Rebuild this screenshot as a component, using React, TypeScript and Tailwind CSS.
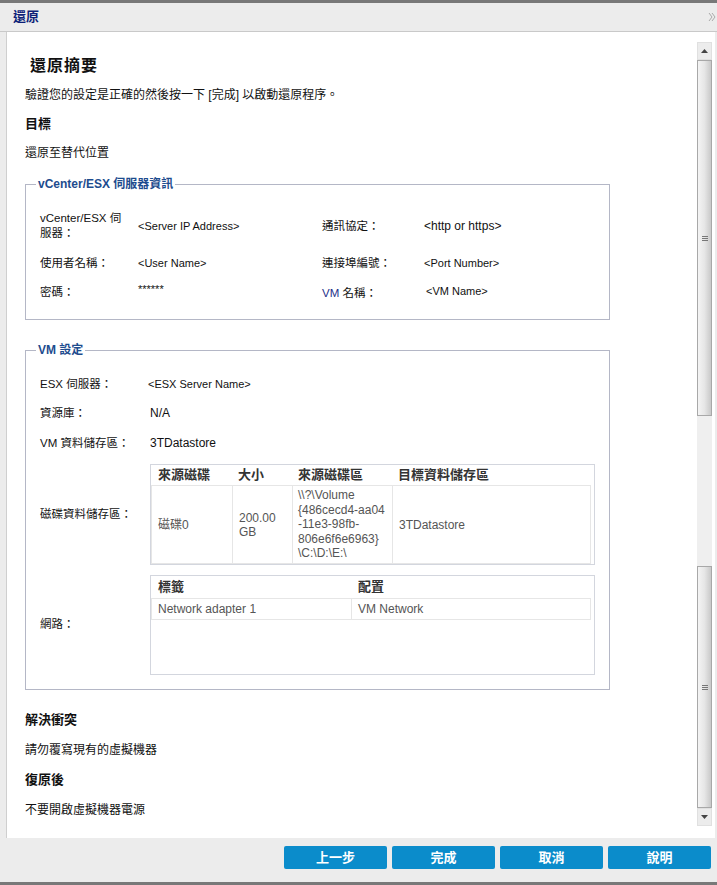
import type { ReactNode } from "react";

const font = { fontFamily: '"Liberation Sans", "Noto Sans CJK TC", sans-serif' };

function Legend({ children }: { children: ReactNode }) {
    return (
        <legend className="-ml-[4px] px-[2px] text-[12px] leading-[16px] font-bold text-[#1d4c8e]">
            {children}
        </legend>
    );
}

function Thumb({ h }: { h: string }) {
    return (
        <div
            className={`${h} flex items-center justify-center border border-[#a8a8a8] bg-gradient-to-r from-[#f4f4f4] via-[#e6e6e6] to-[#c9c9c9]`}
        >
            <div className="flex flex-col gap-[1px]">
                <div className="w-[6px] h-[1px] bg-[#777]" />
                <div className="w-[6px] h-[1px] bg-[#777]" />
                <div className="w-[6px] h-[1px] bg-[#777]" />
            </div>
        </div>
    );
}

function Scrollbar() {
    return (
        <div className="w-[15px] flex flex-col pt-[10px]">
            <div className="h-[18px] flex items-center justify-center bg-[#ececec] border border-[#e0e0e0]">
                <svg width="7" height="4" viewBox="0 0 7 4">
                    <path d="M0 4 L3.5 0 L7 4 Z" fill="#444" />
                </svg>
            </div>
            <Thumb h="h-[356px]" />
            <div className="h-[150px] bg-[#efefef]" />
            <Thumb h="h-[242px]" />
            <div className="h-[18px] flex items-center justify-center bg-[#ececec] border border-[#e0e0e0]">
                <svg width="7" height="4" viewBox="0 0 7 4">
                    <path d="M0 0 L3.5 4 L7 0 Z" fill="#444" />
                </svg>
            </div>
        </div>
    );
}

const footerButtons = ["上一步", "完成", "取消", "說明"];

export default function App() {
    return (
        <div
            className="w-[717px] h-[885px] flex flex-col bg-[#ececec] border-t-[3px] border-b-[3px] border-[#787878] text-[#111]"
            style={font}
        >
            {/* Title bar */}
            <div className="h-[29px] flex items-center justify-between pl-[13px] pr-[1px] border-b border-[#c9c9c9]">
                <span className="text-[13px] font-bold text-[#0d1f78]">還原</span>
                <svg width="8" height="10" viewBox="0 0 8 10">
                    <path d="M1 1 L4 5 L1 9 M4 1 L7 5 L4 9" stroke="#aaa" strokeWidth="1" fill="none" />
                </svg>
            </div>

            {/* Body */}
            <div className="flex-1 flex pl-[6px] pr-[2px] min-h-0">
                <div className="flex-1 flex bg-white border-l border-[#cfcfcf]">
                    <div className="flex-1 pl-[18px] pt-[22px] text-[12px]">
                        <div className="h-[24px] leading-[24px] pl-[5px] text-[16px] font-bold tracking-[1px]">
                            還原摘要
                        </div>
                        <div className="mt-[7px] h-[20px] leading-[20px]">
                            驗證您的設定是正確的然後按一下 [完成] 以啟動還原程序。
                        </div>
                        <div className="mt-[9px] h-[20px] leading-[20px] text-[13px] font-bold">目標</div>
                        <div className="mt-[9px] h-[20px] leading-[20px]">還原至替代位置</div>

                        {/* vCenter fieldset */}
                        <fieldset className="mt-[13px] w-[585px] border border-[#b4b7c6] pl-[14px] pt-[19px] pb-[17px]">
                            <Legend>vCenter/ESX 伺服器資訊</Legend>
                            <div className="grid grid-cols-[98px_184px_102px_1fr] text-[11.5px]">
                                <div className="h-[30px] leading-[15px]">
                                    vCenter/ESX 伺<br />服器：
                                </div>
                                <div className="h-[30px] leading-[30px] text-[11px]">&lt;Server IP Address&gt;</div>
                                <div className="h-[30px] leading-[30px]">通訊協定：</div>
                                <div className="h-[30px] leading-[30px] text-[12px]">&lt;http or https&gt;</div>

                                <div className="mt-[12px] h-[20px] leading-[20px]">使用者名稱：</div>
                                <div className="mt-[12px] h-[20px] leading-[20px] text-[11px]">&lt;User Name&gt;</div>
                                <div className="mt-[12px] h-[20px] leading-[20px]">連接埠編號：</div>
                                <div className="mt-[12px] h-[20px] leading-[20px] text-[11px]">&lt;Port Number&gt;</div>

                                <div className="mt-[9px] h-[20px] leading-[20px]">密碼：</div>
                                <div className="mt-[9px] h-[20px] leading-[14px] text-[11px]">******</div>
                                <div className="mt-[9px] h-[20px] leading-[22px]">
                                    <span className="text-[#1d2f8a]">VM</span> 名稱：
                                </div>
                                <div className="mt-[9px] h-[20px] leading-[18px] pl-[2px] text-[11px]">&lt;VM Name&gt;</div>
                            </div>
                        </fieldset>

                        {/* VM settings fieldset */}
                        <fieldset className="mt-[22px] w-[585px] border border-[#b4b7c6] pl-[14px] pt-[16px] pb-[14px]">
                            <Legend>VM 設定</Legend>
                            <div className="grid grid-cols-[110px_1fr] text-[11.5px]">
                                <div className="h-[20px] leading-[20px]">ESX 伺服器：</div>
                                <div className="h-[20px] leading-[20px] text-[11px] -ml-[2px]">&lt;ESX Server Name&gt;</div>

                                <div className="mt-[9px] h-[20px] leading-[20px]">資源庫：</div>
                                <div className="mt-[9px] h-[20px] leading-[20px] text-[12px]">N/A</div>

                                <div className="mt-[10px] h-[20px] leading-[20px]">VM 資料儲存區：</div>
                                <div className="mt-[10px] h-[20px] leading-[20px] text-[12px]">3TDatastore</div>

                                <div className="mt-[11px] flex items-center">磁碟資料儲存區：</div>
                                <div className="mt-[11px] w-[445px] h-[101px] border border-[#d3d6de] text-[12px] text-[#555]">
                                    <div className="grid grid-cols-[81px_60px_100px_1fr] h-[20px] leading-[20px] text-[13px] font-bold text-[#333]">
                                        <div className="pl-[7px]">來源磁碟</div>
                                        <div className="pl-[6px]">大小</div>
                                        <div className="pl-[6px]">來源磁碟區</div>
                                        <div className="pl-[6px]">目標資料儲存區</div>
                                    </div>
                                    <div className="grid grid-cols-[81px_60px_100px_1fr] mr-[3px] h-[79px] border border-[#e6e6e6] items-center">
                                        <div className="h-full flex items-center pl-[6px] border-r border-[#e6e6e6]">磁碟0</div>
                                        <div className="h-full flex items-center pl-[6px] border-r border-[#e6e6e6] leading-[14px]">
                                            200.00
                                            <br />
                                            GB
                                        </div>
                                        <div className="h-full flex items-center pl-[5px] border-r border-[#e6e6e6] leading-[14.5px]">
                                            <div>
                                                \\?\Volume
                                                <br />
                                                {"{486cecd4-aa04"}
                                                <br />
                                                -11e3-98fb-
                                                <br />
                                                {"806e6f6e6963}"}
                                                <br />
                                                \C:\D:\E:\
                                            </div>
                                        </div>
                                        <div className="h-full flex items-center pl-[6px]">3TDatastore</div>
                                    </div>
                                </div>

                                <div className="mt-[10px] flex items-center">網路：</div>
                                <div className="mt-[10px] w-[445px] h-[100px] border border-[#d3d6de] text-[12px] text-[#555]">
                                    <div className="grid grid-cols-[201px_1fr] h-[22px] leading-[22px] text-[13px] font-bold text-[#333]">
                                        <div className="pl-[7px]">標籤</div>
                                        <div className="pl-[6px]">配置</div>
                                    </div>
                                    <div className="grid grid-cols-[200px_1fr] mr-[3px] h-[22px] border border-[#e6e6e6] leading-[20px]">
                                        <div className="pl-[6px] border-r border-[#e6e6e6]">Network adapter 1</div>
                                        <div className="pl-[6px]">VM Network</div>
                                    </div>
                                </div>
                            </div>
                        </fieldset>

                        <div className="mt-[20px] h-[20px] leading-[20px] text-[13px] font-bold">解決衝突</div>
                        <div className="mt-[10px] h-[20px] leading-[20px]">請勿覆寫現有的虛擬機器</div>
                        <div className="mt-[10px] h-[20px] leading-[20px] text-[13px] font-bold">復原後</div>
                        <div className="mt-[10px] h-[20px] leading-[20px]">不要開啟虛擬機器電源</div>
                    </div>
                    <Scrollbar />
                    <div className="w-[3px]" />
                </div>
            </div>

            {/* Footer */}
            <div className="h-[44px] flex items-start justify-end gap-[5px] pt-[8px] pr-[6px]">
                {footerButtons.map((label) => (
                    <button
                        key={label}
                        className="w-[103px] h-[23px] rounded-[2px] bg-[#0b8ccb] text-white text-[13px] font-bold leading-[23px]"
                    >
                        {label}
                    </button>
                ))}
            </div>
        </div>
    );
}
